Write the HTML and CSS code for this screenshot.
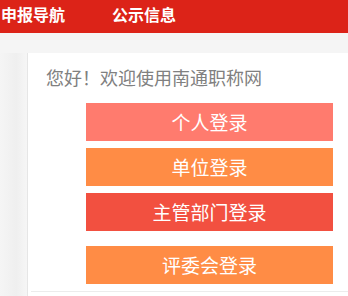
FILE: index.html
```html
<!DOCTYPE html>
<html lang="zh-CN">
<head>
  <meta charset="UTF-8">
  <title>南通职称网</title>
  <link rel="stylesheet" href="styles.css">
</head>
<body>

<div class="topnav">
  <a href="#">申报导航</a>
  <a href="#">公示信息</a>
</div>
<div class="band"></div>

<div class="main">
  <div class="side"></div>
  <div class="panel">
    <div class="welcome">您好！欢迎使用南通职称网</div>
    <div class="logins">
      <a class="btn btn-person" href="#">个人登录</a>
      <a class="btn btn-orange" href="#">单位登录</a>
      <a class="btn btn-red" href="#">主管部门登录</a>
      <a class="btn btn-orange btn-last" href="#">评委会登录</a>
    </div>
    <div class="panel-foot"></div>
  </div>
</div>

</body>
</html>
```

FILE: styles.css
```css
body {
  margin: 0;
  font-family: "Noto Sans CJK SC", "Liberation Sans", sans-serif;
  background: #fff;
}
.topnav {
  height: 33px;
  background: #dc2318;
  display: flex;
  align-items: center;
  gap: 47px;
  padding-left: 1px;
}
.topnav a {
  color: #fff;
  font-size: 16px;
  font-weight: bold;
  text-decoration: none;
  line-height: 24px;
  margin-top: -6px;
}
.band {
  height: 20px;
  background: #f5f5f5;
}
.main {
  display: flex;
  height: 243px;
}
.side {
  width: 27px;
  background: linear-gradient(90deg, #f5f5f5, #efefef 60%, #f6f6f6);
}
.panel {
  flex: 1;
  border-left: 1px solid #e6e6e6;
  background: #fff;
}
.welcome {
  padding: 11px 0 0 18px;
  font-size: 18px;
  line-height: 27px;
  color: #808080;
}
.logins {
  display: flex;
  flex-direction: column;
  gap: 7px;
  margin: 12px 0 0 58px;
  width: 247px;
}
.btn {
  display: block;
  height: 38px;
  line-height: 38px;
  text-align: center;
  color: #fff;
  font-size: 19px;
  text-decoration: none;
}
.btn-person {
  background: #ff7b6e;
}
.btn-orange {
  background: #ff8c45;
}
.btn-red {
  background: #f25040;
}
.btn-last {
  margin-top: 8px;
}
.panel-foot {
  margin: 7px 0 0 3px;
  border-top: 1px solid #ececec;
}
```
